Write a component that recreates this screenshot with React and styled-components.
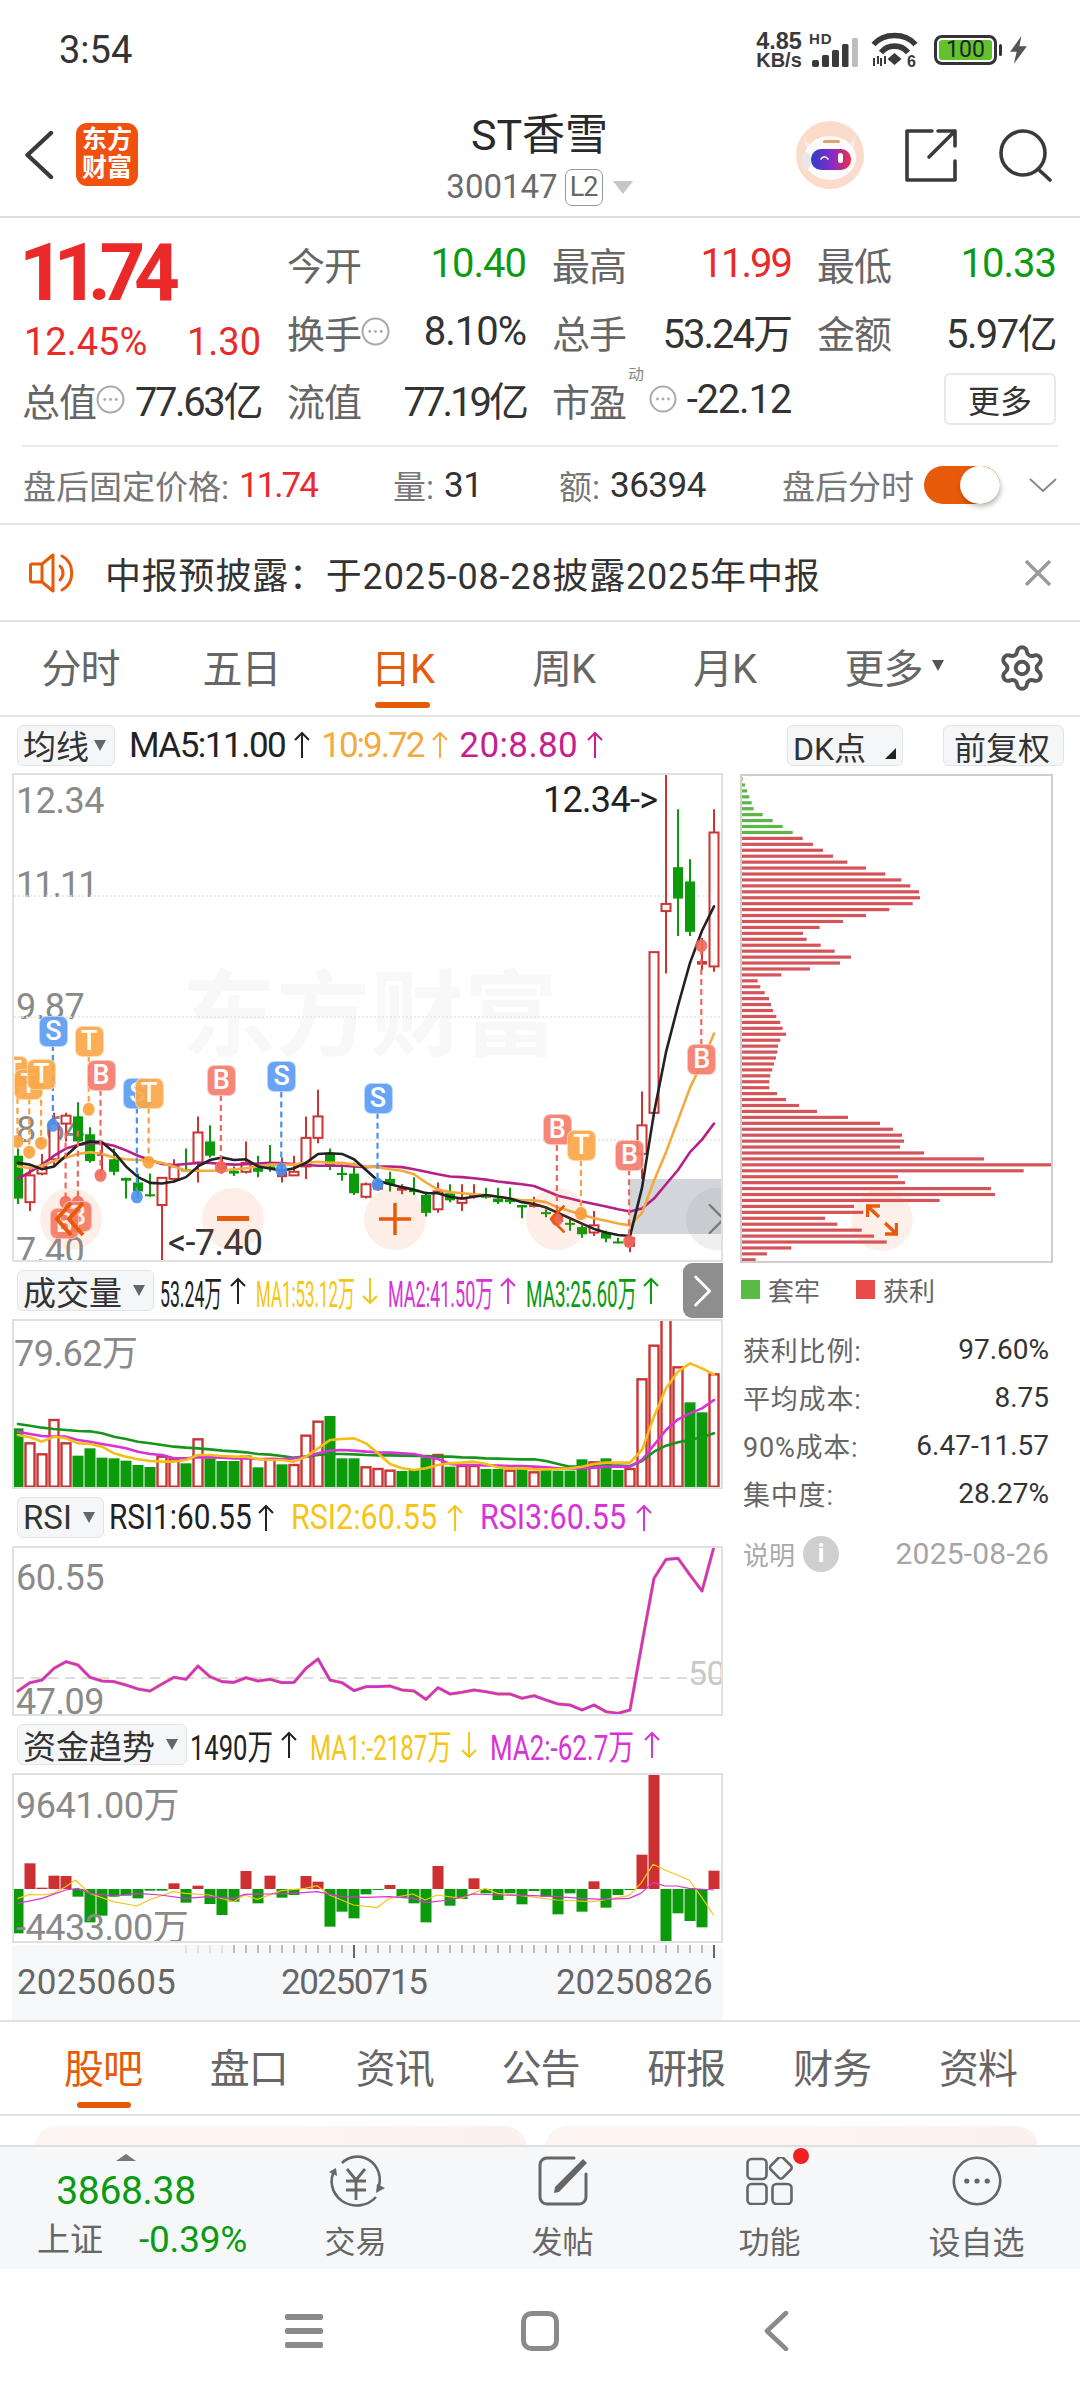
import React from 'react';
import styled, { createGlobalStyle } from 'styled-components';
import { Settings } from 'lucide-react';

const GlobalStyle = createGlobalStyle`
  html, body { margin: 0; padding: 0; background: #fff; }
  * { box-sizing: border-box; }
`;

const RED = '#ea2a2a';
const GREEN = '#0a9b12';
const ORANGE = '#e65a0a';
const YELLOW = '#f5c518';
const MAGENTA = '#d733d7';

/* ---------- data, read from the picture ---------- */
const px = (z) => z / 2.119;
const py = (z) => 720 + z / 2.8;
const vy = (z) => 1260 + z / 3;
const fy = (z) => 1720 + z / 3;
const cx = (i) => 18 + 12 * i;

const CANDLES = [
  ['g',1200,1220,1340,1355],['r',1250,1275,1350,1375],['r',1215,1250,1270,1275],['r',1100,1130,1230,1250],
  ['r',1100,1108,1130,1180],['g',1070,1110,1180,1185],['g',1140,1160,1235,1240],['R',1180,1215,1219,1265],
  ['g',1200,1230,1265,1275],['g',1282,1282,1290,1340],['g',1270,1295,1320,1340],['g',1270,1328,1333,1335],
  ['r',1282,1282,1358,1518],['r',1230,1250,1285,1295],['g',1200,1258,1264,1265],['r',1110,1155,1240,1295],
  ['g',1135,1180,1220,1225],['R',1225,1240,1265,1270],['g',1250,1262,1270,1277],['r',1180,1240,1265,1270],
  ['g',1220,1250,1265,1280],['g',1190,1250,1256,1265],['R',1225,1265,1280,1295],['r',1220,1265,1275,1277],
  ['r',1110,1170,1250,1285],['r',1035,1110,1170,1185],['g',1200,1215,1250,1260],['g',1245,1268,1274,1290],
  ['g',1240,1270,1325,1330],['r',1295,1300,1335,1340],['R',1290,1295,1315,1318],['g',1265,1285,1300,1320],
  ['R',1300,1310,1318,1328],['g',1280,1315,1322,1330],['g',1320,1330,1380,1390],['r',1295,1320,1370,1380],
  ['g',1300,1325,1345,1350],['r',1300,1340,1352,1375],['R',1300,1328,1333,1340],['g',1310,1332,1337,1340],
  ['g',1310,1340,1350,1355],['g',1310,1342,1350,1355],['g',1358,1358,1365,1395],['R',1335,1358,1363,1365],
  ['g',1370,1378,1383,1392],['R',1375,1385,1405,1410],['g',1395,1408,1413,1430],['g',1415,1420,1440,1450],
  ['r',1375,1415,1435,1445],['g',1430,1435,1452,1462],['g',1450,1460,1465,1466],['R',1440,1448,1475,1490],
  ['r',1040,1135,1215,1285],['r',650,650,1100,1110],['r',150,515,535,710],['g',250,412,500,605],
  ['g',390,452,593,605],['R',610,675,685,700],['r',250,315,690,705],
];
const MA5 = [1240,1245,1258,1250,1220,1190,1180,1182,1210,1250,1280,1296,1298,1292,1280,1250,1232,1225,1232,1230,1250,1256,1262,1255,1240,1215,1213,1215,1230,1260,1290,1300,1308,1315,1325,1325,1335,1340,1335,1330,1335,1340,1350,1355,1365,1380,1395,1410,1425,1435,1442,1445,1310,1100,930,800,680,590,522];
const MA10 = [1250,1255,1248,1235,1225,1215,1210,1215,1225,1230,1232,1235,1240,1250,1262,1262,1262,1262,1258,1255,1250,1245,1245,1245,1240,1237,1240,1240,1245,1250,1252,1258,1262,1272,1295,1315,1322,1325,1328,1330,1335,1340,1345,1345,1350,1365,1375,1385,1395,1402,1410,1415,1380,1290,1210,1120,1030,960,878];
const MA20 = [1285,1265,1245,1220,1200,1190,1185,1185,1192,1205,1220,1232,1243,1246,1243,1240,1240,1243,1245,1244,1242,1240,1241,1243,1246,1248,1248,1248,1250,1252,1250,1250,1252,1258,1265,1272,1278,1280,1283,1287,1292,1296,1300,1305,1318,1332,1340,1348,1355,1362,1370,1376,1368,1340,1300,1260,1210,1175,1130];

const BADGES = [
  { l: 'T', x: 28, y: 985 }, { l: 'T', x: 60, y: 1020 }, { l: 'T', x: 87, y: 993 },
  { l: 'S', x: 112, y: 872 }, { l: 'T', x: 188, y: 900 }, { l: 'B', x: 213, y: 995 },
  { l: 'S', x: 290, y: 1045 }, { l: 'T', x: 315, y: 1045 }, { l: 'B', x: 468, y: 1008 },
  { l: 'S', x: 596, y: 998 }, { l: 'S', x: 800, y: 1060 }, { l: 'B', x: 1180, y: 1147 },
  { l: 'T', x: 1231, y: 1190 }, { l: 'B', x: 1333, y: 1218 }, { l: 'B', x: 1486, y: 950 },
  { l: 'B', x: 163, y: 1390 }, { l: 'B', x: 135, y: 1410 },
];
const BADGE_COLOR = { B: '#f67c6c', T: '#fba848', S: '#5c9df2' };
const DRAW_COLOR = { B: '#f2695c', T: '#f9a23a', S: '#4a90ee' };
const DROPS = [
  ['T',37,1030,1180],['T',62,1060,1210],['T',87,1035,1185],['S',112,910,1135],['T',188,940,1090],['B',213,1035,1275],
  ['S',290,1085,1335],['T',315,1085,1238],['B',468,1050,1252],['S',596,1040,1260],['S',800,1100,1300],
  ['B',1180,1190,1398],['T',1231,1232,1382],['B',1333,1258,1460],['B',1486,910,632],['B',139,1155,1350],['B',165,1150,1350],
];

const VOL = [['g',505],['r',550],['r',583],['r',480],['r',550],['g',587],['g',565],['g',593],['g',595],['g',602],['g',615],['g',621],['r',590],['r',598],['g',610],['r',538],['g',595],['g',603],['g',603],['r',590],['g',622],['r',597],['g',613],['r',615],['r',527],['r',485],['g',468],['g',595],['g',595],['r',622],['r',627],['r',632],['g',633],['g',630],['g',592],['r',585],['g',620],['r',618],['r',618],['g',627],['g',627],['r',632],['g',627],['r',637],['g',630],['g',632],['g',632],['g',598],['r',607],['g',595],['g',630],['r',627],['r',358],['r',257],['r',178],['r',322],['g',427],['g',457],['r',343]];
const VOL1 = [525,532,545,530,535,550,552,560,580,590,598,603,605,605,600,585,585,588,590,590,597,600,600,605,590,565,540,537,535,550,580,612,625,630,625,615,610,608,605,612,622,625,625,628,628,627,625,620,612,608,608,608,570,470,385,335,310,325,343];
const VOL2 = [515,522,528,530,530,540,545,552,558,565,575,582,585,595,595,592,592,593,595,595,597,597,597,595,590,580,572,570,572,575,577,578,580,582,590,597,612,615,615,616,617,618,618,620,622,625,625,625,623,620,620,620,600,555,510,478,460,445,420];
const VOL3 = [492,497,503,507,510,513,514,520,530,537,545,550,555,560,563,565,568,572,574,577,582,584,588,593,590,585,582,582,583,585,586,586,587,588,588,590,590,592,593,595,596,597,598,598,603,612,620,620,618,617,617,618,603,575,557,547,540,532,520];
const RSI = [1293,1268,1260,1225,1205,1215,1252,1263,1265,1275,1287,1293,1272,1252,1258,1218,1250,1265,1267,1253,1263,1258,1268,1267,1225,1197,1260,1268,1292,1280,1280,1278,1290,1293,1318,1283,1302,1297,1290,1295,1302,1302,1315,1307,1320,1332,1335,1350,1335,1355,1360,1350,1150,955,898,895,945,993,860];
const FUND = [640,430,503,467,468,530,607,587,530,527,535,512,512,490,548,497,552,585,545,453,550,467,533,525,468,485,620,575,595,523,510,495,533,550,607,438,557,537,475,520,540,520,553,513,530,583,520,575,484,563,525,510,404,158,665,580,603,622,452];
const FUND1 = [[38,535],[63,523],[89,525],[114,520],[139,500],[160,480],[190,520],[240,545],[290,558],[316,540],[367,515],[392,520],[443,525],[494,545],[519,525],[545,538],[596,512],[647,505],[672,497],[698,525],[749,555],[799,563],[825,535],[875,522],[901,540],[926,525],[977,535],[1028,505],[1054,520],[1104,527],[1180,540],[1257,545],[1333,527],[1358,490],[1384,433],[1409,450],[1460,480],[1486,530],[1512,585]];
const FUND2 = [[38,550],[89,535],[139,510],[165,505],[190,520],[240,528],[290,520],[340,525],[392,535],[443,530],[494,535],[519,523],[570,522],[621,520],[672,515],[723,530],[774,532],[825,530],[875,535],[901,548],[952,540],[1003,522],[1054,525],[1130,527],[1180,530],[1231,535],[1282,538],[1333,535],[1358,520],[1384,487],[1409,498],[1435,498],[1460,505],[1512,510]];
const CHIPS = [68,75,81,88,95,101,128,158,188,218,248,279,309,339,382,438,496,544,571,597,600,578,508,438,369,299,249,260,302,344,393,360,270,184,113,121,134,147,153,159,169,181,188,198,181,174,172,168,162,157,151,148,148,171,198,237,291,384,480,519,546,552,540,612,792,993,911,534,555,813,825,659,402,430,315,352,425,462,500,214,141,107];

const series = (list, toY) => list.map((v, i) => `${cx(i)},${toY(v)}`).join(' ');

/* ---------- page frame ---------- */
const Page = styled.div`
  width: 1080px;
  height: 2400px;
  background: #fff;
  display: flex;
  flex-direction: column;
  overflow: hidden;
  color: #333;
  font-family: Roboto, "Noto Sans CJK SC", sans-serif;
  font-weight: 400;
`;

const StatusBar = styled.div`
  height: 85px;
  display: flex;
  align-items: center;
  padding: 15px 52px 0 59px;
  justify-content: space-between;
`;
const Clock = styled.span`
  font-size: 38px;
  color: #333;
`;
const StatusIcons = styled.div`
  display: flex;
  align-items: center;
`;
const NetSpeed = styled.div`
  font-size: 20px;
  line-height: 18px;
  font-weight: 700;
  color: #3a3a3a;
  text-align: center;
  width: 48px;
  font-family: "Liberation Sans", sans-serif;
`;
const NetValue = styled.div`
  font-size: 23.5px;
  line-height: 20px;
`;
const SignalWrap = styled.div`
  position: relative;
  margin-left: 9px;
  width: 46px;
  height: 34px;
`;
const HdMark = styled.span`
  position: absolute;
  left: -3px;
  top: -2px;
  font-size: 15px;
  line-height: 15px;
  font-weight: 700;
  letter-spacing: 1px;
  color: #3a3a3a;
  font-family: "Liberation Sans", sans-serif;
`;
const Battery = styled.div`
  width: 63px;
  height: 30px;
  margin-left: 16px;
  border: 3px solid #333;
  border-radius: 8px;
  padding: 2px;
  display: flex;
`;
const BatteryFill = styled.div`
  flex: 1;
  background: #63c22c;
  border-radius: 3px;
  font-size: 23px;
  line-height: 20px;
  text-align: center;
  color: #223;
`;
const BatteryCap = styled.div`
  width: 3px;
  height: 12px;
  margin-left: 2px;
  border-radius: 2px;
  background: #333;
`;

const Header = styled.div`
  height: 133px;
  display: grid;
  grid-template-columns: 1fr auto 1fr;
  align-items: center;
  padding: 8px 28px 0 24px;
  border-bottom: 2px solid #ddd;
`;
const HeaderLeft = styled.div`
  display: flex;
  align-items: center;
  gap: 22px;
`;
const Logo = styled.div`
  width: 62px;
  height: 63px;
  border-radius: 11px;
  background: #f0510f;
  color: #fff;
  font-size: 25px;
  line-height: 28px;
  font-weight: 700;
  text-align: center;
  padding-top: 3px;
`;
const TitleBlock = styled.div`
  align-self: start;
  margin: 19px 0 0 3px;
  display: flex;
  flex-direction: column;
  align-items: center;
`;
const Title = styled.div`
  font-size: 43px;
  line-height: 46px;
  color: #2a2a2a;
`;
const CodeRow = styled.div`
  display: flex;
  align-items: center;
  margin-top: 10px;
  font-size: 33px;
  color: #6b6b6b;
  line-height: 38px;
`;
const LevelTag = styled.span`
  margin-left: 7px;
  width: 38px;
  height: 37px;
  border: 1.5px solid #999;
  border-radius: 7px;
  font-size: 27px;
  line-height: 34px;
  text-align: center;
  color: #666;
  letter-spacing: -1px;
`;
const CaretDown = styled.span`
  margin-left: 10px;
  border-left: 10px solid transparent;
  border-right: 10px solid transparent;
  border-top: 13px solid #c6c6c6;
`;
const HeaderRight = styled.div`
  display: flex;
  align-items: center;
  justify-content: flex-end;
  gap: 40px;
`;

/* ---------- quote ---------- */
const Quote = styled.div`
  margin: 0 22px;
  height: 229px;
  padding: 11px 2px 0 0;
  display: grid;
  grid-template-columns: repeat(4, 1fr);
  grid-auto-rows: 68px;
  column-gap: 26px;
  border-bottom: 2px solid #eaeaea;
`;
const PriceCell = styled.div`
  grid-row: 1 / 3;
  display: flex;
  flex-direction: column;
`;
const Price = styled.div`
  font-size: 80px;
  line-height: 70px;
  margin: 9px 0 0 -3px;
  font-weight: 700;
  letter-spacing: -11.5px;
  color: ${RED};
`;
const ChangeRow = styled.div`
  display: flex;
  justify-content: space-between;
  font-size: 38px;
  line-height: 44px;
  margin: 12px 0 0 2px;
  color: ${RED};
`;
const Cell = styled.div`
  display: flex;
  align-items: center;
  justify-content: ${(p) => p.$justify || 'space-between'};
`;
const Label = styled.span`
  display: inline-flex;
  align-items: center;
  font-size: 38px;
  letter-spacing: -1px;
  color: #666;
  position: relative;
`;
const Value = styled.span`
  font-size: 40px;
  letter-spacing: ${(p) => p.$ls ?? -1}px;
  color: ${(p) => p.$color || '#333'};
`;
const Super = styled.sup`
  position: absolute;
  left: 76px;
  top: -6px;
  font-size: 16px;
  line-height: 18px;
  color: #888;
`;
const SuperGap = styled.span`
  width: 23px;
`;
const MoreButton = styled.button`
  width: 112px;
  height: 52px;
  padding: 0;
  border: 2px solid #e8e8e8;
  border-radius: 6px;
  background: #fff;
  font: inherit;
  font-size: 32px;
  color: #333;
`;

const AfterHours = styled.div`
  height: 78px;
  padding-left: 23px;
  display: grid;
  grid-template-columns: 370px 166px 223px 1fr;
  align-items: center;
  font-size: 33px;
  border-bottom: 2px solid #e6e6e6;
`;
const HoursItem = styled.div`
  display: flex;
  align-items: center;
  color: #777;
  gap: ${(p) => p.$gap ?? 10}px;
`;
const HoursValue = styled.span`
  font-size: 35px;
  letter-spacing: ${(p) => p.$ls ?? -0.5}px;
  color: ${(p) => p.$color || '#333'};
`;
const Toggle = styled.div`
  width: 76px;
  height: 38px;
  border-radius: 19px;
  background: ${ORANGE};
  display: flex;
  justify-content: flex-end;
`;
const ToggleKnob = styled.div`
  width: 40px;
  height: 38px;
  border-radius: 50%;
  background: #fff;
  box-shadow: 1px 3px 5px rgba(0, 0, 0, 0.25);
`;

const Notice = styled.div`
  height: 97px;
  display: flex;
  align-items: center;
  padding: 0 28px 0 29px;
  border-bottom: 2px solid #e3e3e3;
`;
const NoticeText = styled.div`
  flex: 1;
  margin-left: 30px;
  font-size: 36px;
  letter-spacing: 0.8px;
  color: #333;
`;

const PeriodTabs = styled.div`
  height: 95px;
  display: grid;
  grid-template-columns: repeat(5, 161px) 178px 1fr;
  align-items: stretch;
  border-bottom: 2px solid #e3e3e3;
`;
const Period = styled.div`
  position: relative;
  display: flex;
  align-items: center;
  justify-content: center;
  padding-bottom: 6px;
  font-size: 40px;
  letter-spacing: -1px;
  color: ${(p) => (p.$active ? ORANGE : '#666')};
  &::after {
    content: '';
    display: ${(p) => (p.$active ? 'block' : 'none')};
    position: absolute;
    left: 50%;
    bottom: 7px;
    width: 55px;
    height: 6px;
    margin-left: -28px;
    border-radius: 3px;
    background: ${ORANGE};
  }
`;
const SmallCaret = styled.span`
  margin-left: 9px;
  border-left: 6px solid transparent;
  border-right: 6px solid transparent;
  border-top: 11px solid #555;
`;
const GearSlot = styled.div`
  display: flex;
  align-items: center;
  padding: 0 0 2px 14px;
  color: #555;
`;

/* ---------- charts ---------- */
const ChartArea = styled.div`
  display: flex;
  height: 1305px;
  border-bottom: 2px solid #e2e2e2;
`;
const LeftColumn = styled.div`
  width: 711px;
  margin-left: 12px;
  display: flex;
  flex-direction: column;
`;
const Toolbar = styled.div`
  flex: none;
  height: ${(p) => p.$h}px;
  display: flex;
  align-items: center;
  position: relative;
`;
const Select = styled.div`
  position: relative;
  height: 41px;
  width: ${(p) => p.$w}px;
  margin-left: ${(p) => p.$ml ?? 5}px;
  flex: none;
  display: flex;
  align-items: center;
  justify-content: ${(p) => p.$justify || 'space-between'};
  padding: 0 8px 0 5px;
  background: #f5f6f8;
  border: 1.5px solid #e2e3e6;
  border-radius: 6px;
  font-size: ${(p) => p.$fs || 33}px;
  color: #333;
`;
const SelectCaret = styled.span`
  border-left: 6px solid transparent;
  border-right: 6px solid transparent;
  border-top: 11px solid #666;
`;
const CornerCaret = styled.span`
  position: absolute;
  right: 6px;
  bottom: 6px;
  border-left: 11px solid transparent;
  border-bottom: 11px solid #222;
`;
const Legend = styled.div`
  display: flex;
  align-items: center;
  margin-left: ${(p) => p.$ml}px;
  gap: ${(p) => p.$gap}px;
  font-size: ${(p) => p.$fs}px;
`;
const LegendItem = styled.span`
  display: inline-flex;
  align-items: center;
  color: ${(p) => p.$color};
  letter-spacing: ${(p) => p.$ls ?? 0}px;
  white-space: nowrap;
`;
/* the app draws these read-outs in a condensed face: same glyphs, narrowed */
const Condensed = styled.span`
  display: inline-block;
  width: ${(p) => p.$w}px;
  white-space: nowrap;
  transform-origin: left center;
  transform: scaleX(${(p) => p.$sx});
`;
const LegendArrow = styled.svg`
  width: 18px;
  height: 28px;
  margin-left: ${(p) => p.$ml ?? 8}px;
  flex: none;
`;
const PanelToggle = styled.div`
  position: absolute;
  right: 0;
  top: 1px;
  width: 40px;
  height: 55px;
  background: #8e8e8e;
  border-radius: 9px 0 0 9px;
  display: flex;
  align-items: center;
  justify-content: center;
`;
const ChartBox = styled.div`
  flex: none;
  position: relative;
  height: ${(p) => p.$h}px;
  border: 2px solid #e0e0e0;
  overflow: hidden;
`;
const Plot = styled.svg`
  display: block;
  position: relative;
`;
const AxisLabel = styled.span`
  position: absolute;
  left: ${(p) => p.$x}px;
  top: ${(p) => p.$y}px;
  font-size: ${(p) => p.$fs || 36}px;
  line-height: 36px;
  color: ${(p) => p.$color || '#8a8a8a'};
  letter-spacing: ${(p) => p.$ls ?? -0.5}px;
  white-space: nowrap;
`;
const Watermark = styled.span`
  position: absolute;
  left: 168px;
  top: 192px;
  font-size: 94px;
  line-height: 100px;
  font-weight: 700;
  color: #f8f8f8;
  white-space: nowrap;
`;
const Badge = styled.span`
  position: absolute;
  width: 29px;
  height: 31px;
  border-radius: 7px;
  border: 1px solid rgba(255, 255, 255, 0.55);
  background: ${(p) => p.$color};
  opacity: 0.92;
  color: #fff;
  font-size: 27px;
  line-height: 29px;
  font-weight: 500;
  text-align: center;
`;
const RoundControl = styled.div`
  position: absolute;
  left: ${(p) => p.$x - 31}px;
  top: ${(p) => p.$y - 31}px;
  width: 62px;
  height: 62px;
  border-radius: 50%;
  background: ${(p) => p.$tint};
  display: flex;
  align-items: center;
  justify-content: center;
`;

const DateAxis = styled.div`
  margin-top: 2px;
  height: 77px;
  background: #f7f8fa;
  display: flex;
  flex-direction: column;
`;
const DateRow = styled.div`
  display: grid;
  grid-template-columns: 264px 275px 1fr;
  padding: 3px 0 0 5px;
  font-size: 35px;
  color: #666;
`;
const DateText = styled.span`
  letter-spacing: ${(p) => p.$ls}px;
`;

/* ---------- chip column ---------- */
const RightColumn = styled.div`
  width: 324px;
  margin-left: 17px;
  display: flex;
  flex-direction: column;
`;
const ChipBox = styled.div`
  position: relative;
  width: 313px;
  height: 489px;
  border: 2px solid #cfcfcf;
`;
const ChipLegend = styled.div`
  display: flex;
  align-items: center;
  height: 52px;
  font-size: 26px;
  color: #666;
  padding-left: 1px;
`;
const Swatch = styled.span`
  width: 19px;
  height: 19px;
  background: ${(p) => p.$color};
  margin-right: 8px;
  margin-left: ${(p) => p.$ml || 0}px;
`;
const Stats = styled.div`
  width: 309px;
  margin-top: 10px;
  padding-left: 3px;
  display: flex;
  flex-direction: column;
`;
const StatRow = styled.div`
  height: 48px;
  display: flex;
  align-items: center;
  justify-content: space-between;
  font-size: 27px;
  letter-spacing: 0.8px;
  color: #666;
`;
const StatValue = styled.span`
  font-size: 28px;
  color: #333;
  letter-spacing: 0;
`;
const NoteRow = styled.div`
  margin-top: 18px;
  display: flex;
  align-items: center;
  font-size: 26px;
  color: #aaa;
`;
const InfoDot = styled.span`
  width: 36px;
  height: 36px;
  margin-left: 8px;
  border-radius: 50%;
  background: #cfcfcf;
  color: #fff;
  font-size: 25px;
  line-height: 36px;
  font-weight: 700;
  text-align: center;
`;
const NoteDate = styled.span`
  margin-left: auto;
  font-size: 30px;
  letter-spacing: 0.2px;
  color: #a5a5a5;
`;

/* ---------- bottom ---------- */
const InfoTabs = styled.div`
  height: 94px;
  display: flex;
  justify-content: space-between;
  padding: 27px 63px 0 64px;
  border-bottom: 2px solid #e2e2e2;
`;
const InfoTab = styled.div`
  position: relative;
  font-size: 40px;
  line-height: 42px;
  letter-spacing: -1px;
  color: ${(p) => (p.$active ? ORANGE : '#666')};
  &::after {
    content: '';
    display: ${(p) => (p.$active ? 'block' : 'none')};
    position: absolute;
    left: 13px;
    top: 53px;
    width: 54px;
    height: 6px;
    border-radius: 3px;
    background: ${ORANGE};
  }
`;
const Peek = styled.div`
  height: 29px;
  padding: 10px 42px 0 34px;
  display: grid;
  grid-template-columns: 1fr 1fr;
  gap: 18px;
  overflow: hidden;
`;
const PeekCard = styled.div`
  height: 40px;
  border-radius: 22px 22px 0 0;
  background: linear-gradient(90deg, #fdf5f3, #fdf1ee);
`;
const BottomBar = styled.div`
  height: 124px;
  background: #f6f7f9;
  border-top: 2px solid #dedede;
  display: grid;
  grid-template-columns: 252px repeat(4, 207px);
`;
const IndexBlock = styled.div`
  display: flex;
  flex-direction: column;
  align-items: center;
  padding-top: 7px;
`;
const IndexCaret = styled.span`
  border-left: 10px solid transparent;
  border-right: 10px solid transparent;
  border-bottom: 7px solid #777;
`;
const IndexValue = styled.div`
  margin-top: 10px;
  font-size: 39px;
  line-height: 40px;
  letter-spacing: -0.3px;
  color: ${GREEN};
`;
const IndexRow = styled.div`
  align-self: flex-start;
  margin: 9px 0 0 37px;
  display: flex;
  align-items: center;
  gap: 36px;
  line-height: 40px;
  font-size: 33px;
  color: #666;
`;
const IndexChange = styled.span`
  font-size: 37px;
  color: ${GREEN};
  letter-spacing: -0.2px;
`;
const NavAction = styled.div`
  position: relative;
  display: flex;
  flex-direction: column;
  align-items: center;
  padding-top: 6px;
  font-size: ${(p) => p.$fs || 31}px;
  line-height: 38px;
  color: #666;
`;
const IconSlot = styled.div`
  height: 56px;
  margin-bottom: 15px;
  display: flex;
  align-items: center;
  justify-content: center;
`;
const RedDot = styled.span`
  position: absolute;
  left: 127px;
  top: 1px;
  width: 16px;
  height: 16px;
  border-radius: 50%;
  background: #ee2020;
`;
const SystemNav = styled.div`
  flex: 1;
  display: grid;
  grid-template-columns: repeat(3, 236px);
  justify-content: center;
  justify-items: center;
  align-items: center;
  padding-bottom: 8px;
`;

/* ---------- drawings ---------- */
const UpArrow = ({ color, ml, down }) => (
  <LegendArrow viewBox="0 0 18 28" $ml={ml}>
    <path d={down ? 'M9 1V26M2 19L9 26L16 19' : 'M9 27V2M2 9L9 2L16 9'} stroke={color} strokeWidth="2" fill="none" />
  </LegendArrow>
);
const DotsCircle = ({ size, stroke = '#aaa', sw = 2 }) => (
  <svg width={size} height={size} viewBox="0 0 28 28" style={{ flex: 'none' }}>
    <circle cx="14" cy="14" r="12.5" fill="none" stroke={stroke} strokeWidth={sw} />
    <circle cx="8.5" cy="14" r="1.4" fill={stroke} />
    <circle cx="14" cy="14" r="1.4" fill={stroke} />
    <circle cx="19.5" cy="14" r="1.4" fill={stroke} />
  </svg>
);
const Chev = ({ dir, color = ORANGE, w = 30, h = 46, sw = 4 }) => (
  <svg width={w} height={h} viewBox="0 0 30 46">
    <path d={dir === 'left' ? 'M25 4L6 23L25 42' : 'M5 4L24 23L5 42'} fill="none" stroke={color} strokeWidth={sw} strokeLinecap="round" strokeLinejoin="round" />
  </svg>
);
const BackIcon = () => (
  <svg width="30" height="50" viewBox="0 0 30 50">
    <path d="M27 3L3.5 25L27 47" fill="none" stroke="#3a3a3a" strokeWidth="4.4" strokeLinecap="round" strokeLinejoin="round" />
  </svg>
);
const SignalIcon = () => (
  <svg width="46" height="30" viewBox="0 0 46 30" style={{ position: 'absolute', left: 0, bottom: 0 }}>
    <rect x="0" y="23" width="7" height="7" rx="2" fill="#3a3a3a" />
    <rect x="10" y="18" width="7" height="12" rx="1.5" fill="#3a3a3a" />
    <rect x="20" y="13" width="7" height="17" rx="1.5" fill="#3a3a3a" />
    <rect x="30" y="7" width="6.5" height="23" rx="1.5" fill="#3a3a3a" />
    <rect x="40" y="1" width="6" height="29" rx="1.5" fill="#bdbdbd" />
  </svg>
);
const WifiIcon = () => (
  <svg width="47" height="36" viewBox="0 0 47 36" style={{ marginLeft: 13 }}>
    <path d="M2.5 12.5C13 0.5 34 0.5 44.5 12.5" fill="none" stroke="#3a3a3a" strokeWidth="5.6" />
    <path d="M10 20.5C17 12 30 12 37 20.5" fill="none" stroke="#3a3a3a" strokeWidth="5.6" />
    <path d="M16.5 27L23.5 21L30.5 27L23.5 33Z" fill="#3a3a3a" />
    <path d="M3 26V34M7 32V24M10 26V34M14 24V32" stroke="#3a3a3a" strokeWidth="2" fill="none" />
    <text x="36" y="35" fontSize="16" fontWeight="700" fill="#3a3a3a" fontFamily="Liberation Sans">6</text>
  </svg>
);
const BoltIcon = () => (
  <svg width="19" height="28" viewBox="0 0 20 30" style={{ marginLeft: 7 }}>
    <path d="M13 0L1 17H8L5 30L19 11H11Z" fill="#555" />
  </svg>
);
const Avatar = () => (
  <svg width="68" height="68" viewBox="0 0 68 68">
    <defs>
      <linearGradient id="visor" x1="0" x2="1" y1="0" y2="0">
        <stop offset="0" stopColor="#2f3fc8" />
        <stop offset="0.55" stopColor="#8a2bc6" />
        <stop offset="1" stopColor="#ee2f45" />
      </linearGradient>
    </defs>
    <circle cx="34" cy="34" r="34" fill="#fbdccb" />
    <path d="M8 16C10 22 14 24 18 24L14 30C10 26 8 22 8 16Z" fill="#f2efee" />
    <path d="M58 16C57 22 53 24 49 24L54 30C58 26 59 22 58 16Z" fill="#f2efee" />
    <ellipse cx="34" cy="37" rx="26" ry="22" fill="#fbfbfb" />
    <ellipse cx="10" cy="40" rx="5" ry="9" fill="#e9e6e4" />
    <rect x="27" y="19" width="17" height="3" rx="1.5" fill="#e99d68" />
    <rect x="15" y="28" width="40" height="21" rx="10" fill="url(#visor)" />
    <path d="M25 38C27 35 30 35 32 38" stroke="#fff" strokeWidth="1.6" fill="none" strokeLinecap="round" />
    <rect x="42" y="32" width="5" height="10" rx="2.5" fill="#fff" />
  </svg>
);
const ShareIcon = () => (
  <svg width="54" height="54" viewBox="0 0 54 54">
    <path d="M28 3H3V52H51V33" fill="none" stroke="#3a3a3a" strokeWidth="3.6" strokeLinejoin="round" strokeLinecap="round" />
    <path d="M51 18V3H34M51 3L25 29" fill="none" stroke="#3a3a3a" strokeWidth="3.6" strokeLinejoin="round" strokeLinecap="round" />
  </svg>
);
const SearchIcon = () => (
  <svg width="54" height="54" viewBox="0 0 54 54">
    <circle cx="25" cy="25" r="22" fill="none" stroke="#3a3a3a" strokeWidth="3.6" />
    <path d="M40 41L52 52" fill="none" stroke="#3a3a3a" strokeWidth="3.6" strokeLinecap="round" />
  </svg>
);
const SpeakerIcon = () => (
  <svg width="46" height="40" viewBox="0 0 46 40" style={{ flex: 'none' }}>
    <path d="M13 11H3C2 11 1.5 12 1.5 13V27C1.5 28 2 29 3 29H13L24 38V2Z" fill="none" stroke={ORANGE} strokeWidth="3" strokeLinejoin="round" />
    <path d="M13 11V29" stroke={ORANGE} strokeWidth="3" />
    <path d="M31 13C35 17 35 23 31 27" fill="none" stroke={ORANGE} strokeWidth="3" strokeLinecap="round" />
    <path d="M33 37C46 30 46 10 33 3" fill="none" stroke={ORANGE} strokeWidth="3" strokeLinecap="round" />
  </svg>
);
const CloseIcon = () => (
  <svg width="28" height="26" viewBox="0 0 28 26">
    <path d="M2 1L26 25M26 1L2 25" stroke="#9a9a9a" strokeWidth="3.4" />
  </svg>
);
const ChevronDownThin = () => (
  <svg width="28" height="14" viewBox="0 0 28 14" style={{ marginLeft: 19 }}>
    <path d="M1 1L14 13L27 1" fill="none" stroke="#8a8a8a" strokeWidth="2" />
  </svg>
);
const TradeIcon = () => (
  <svg width="58" height="54" viewBox="0 0 58 54">
    <path d="M15 9C21 3 30 1 38 4C49 8 55 20 52 32" fill="none" stroke="#666" strokeWidth="2.6" />
    <path d="M49 43C40 53 26 54 15 47C4 39 2 25 8 16" fill="none" stroke="#666" strokeWidth="2.6" />
    <path d="M2 18L9 14L10 22Z" fill="#666" />
    <path d="M58 34L49 39L50 30Z" fill="#666" />
    <path d="M20 15L29 26L38 15M19 27H39M19 36H39M29 26V46" fill="none" stroke="#666" strokeWidth="2.8" />
  </svg>
);
const PostIcon = () => (
  <svg width="50" height="50" viewBox="0 0 50 50">
    <path d="M36 2H9C5 2 2 5 2 9V41C2 45 5 48 9 48H41C45 48 48 45 48 41V18" fill="none" stroke="#666" strokeWidth="3" strokeLinecap="round" />
    <path d="M17 31L45 3L49 7L21 36L16 37Z" fill="#666" />
  </svg>
);
const AppsIcon = () => (
  <svg width="48" height="48" viewBox="0 0 48 48">
    <rect x="1.5" y="2" width="19" height="20" rx="4" fill="none" stroke="#666" strokeWidth="2.6" />
    <rect x="26" y="2" width="17" height="17" rx="3" fill="none" stroke="#666" strokeWidth="2.6" transform="rotate(45 34.5 11)" />
    <rect x="1.5" y="27" width="19" height="20" rx="4" fill="none" stroke="#666" strokeWidth="2.6" />
    <rect x="26.5" y="27" width="19" height="20" rx="4" fill="none" stroke="#666" strokeWidth="2.6" />
  </svg>
);
const ResizeIcon = () => (
  <svg width="32" height="32" viewBox="0 0 32 32">
    <path d="M1.5 13V2H14M2.5 3L13 13M19 30H30.5V19M30 29.5L19 19" fill="none" stroke={ORANGE} strokeWidth="3.4" />
  </svg>
);

const Line = ({ points, color, width = 2.2 }) => (
  <polyline points={points} fill="none" stroke={color} strokeWidth={width} strokeLinejoin="round" strokeLinecap="round" />
);

const CandleShape = ({ d, i }) => {
  const [k, hi, top, bot, lo] = d;
  const x = cx(i);
  const color = k === 'g' ? '#0a9a0a' : '#cc3333';
  const hollow = k === 'r';
  return (
    <g>
      <line x1={x} x2={x} y1={py(hi)} y2={py(lo)} stroke={color} strokeWidth="2" />
      <rect
        x={x - (hollow ? 4.5 : 5)}
        y={py(top)}
        width={hollow ? 9 : 10}
        height={Math.max(py(bot) - py(top), 2)}
        fill={hollow ? '#fff' : color}
        stroke={hollow ? color : 'none'}
        strokeWidth="2"
      />
    </g>
  );
};

const PriceBox = () => (
  <ChartBox $h={489}>
    <Watermark>东方财富</Watermark>
    <AxisLabel $x={2} $y={8}>12.34</AxisLabel>
    <AxisLabel $x={2} $y={92} $ls={-2}>11.11</AxisLabel>
    <AxisLabel $x={2} $y={214}>9.87</AxisLabel>
    <AxisLabel $x={2} $y={337}>8.64</AxisLabel>
    <AxisLabel $x={2} $y={458}>7.40</AxisLabel>
    <Plot width="707" height="485" viewBox="14 775 707 485">
      {[896, 1017, 1140].map((y) => (
        <line key={y} x1="14" x2="721" y1={y} y2={y} stroke="#e4e4e4" strokeWidth="1.5" strokeDasharray="2 2" />
      ))}
      <rect x="629" y="1179" width="94" height="55" fill="#d2d5da" />
      {CANDLES.map((d, i) => <CandleShape key={i} d={d} i={i} />)}
      <Line points={series(MA20, py)} color="#b81f86" width="2.6" />
      <Line points={series(MA10, py)} color="#f2ab3c" width="2.6" />
      <Line points={series(MA5, py)} color="#222" width="2.6" />
      {DROPS.map(([l, x, a, b], i) => (
        <g key={i}>
          <line x1={px(x)} x2={px(x)} y1={py(a)} y2={py(b)} stroke={DRAW_COLOR[l]} strokeWidth="2.2" strokeDasharray="6 4" />
          <ellipse cx={px(x)} cy={py(b)} rx="6" ry="6.5" fill={DRAW_COLOR[l]} opacity="0.9" />
        </g>
      ))}
    </Plot>
    <AxisLabel $x={529} $y={7} $color="#222" $ls={-0.7}>12.34-&gt;</AxisLabel>
    <AxisLabel $x={154} $y={450} $color="#333" $ls={-0.7}>&lt;-7.40</AxisLabel>
    {BADGES.map((b, i) => (
      <Badge
        key={i}
        $color={BADGE_COLOR[b.l]}
        style={{ left: px(b.x) - 14 - 14, top: py(b.y) - 15.5 - 775 }}
      >
        {b.l}
      </Badge>
    ))}
    <RoundControl $x={57} $y={444} $tint="rgba(240,110,50,0.11)">
      <svg width="40" height="40" viewBox="0 0 40 40">
        <path d="M20 4L6 20L20 36M32 4L18 20L32 36" fill="none" stroke={ORANGE} strokeWidth="4" />
      </svg>
    </RoundControl>
    <RoundControl $x={219} $y={444} $tint="rgba(240,110,50,0.11)">
      <svg width="32" height="6" viewBox="0 0 32 6"><rect width="32" height="5" fill={ORANGE} /></svg>
    </RoundControl>
    <RoundControl $x={381} $y={444} $tint="rgba(240,110,50,0.11)">
      <svg width="32" height="32" viewBox="0 0 32 32"><path d="M0 16H32M16 0V32" stroke={ORANGE} strokeWidth="3.5" /></svg>
    </RoundControl>
    <RoundControl $x={543} $y={444} $tint="rgba(240,110,50,0.11)">
      <Chev dir="left" w={20} h={32} />
    </RoundControl>
    <RoundControl $x={703} $y={444} $tint="rgba(140,140,140,0.14)">
      <Chev dir="right" color="#777" w={22} h={38} sw={3} />
    </RoundControl>
  </ChartBox>
);

const VolumeBox = () => (
  <ChartBox $h={170}>
    <Plot width="707" height="166" viewBox="14 1321 707 166">
      {VOL.map(([k, t], i) =>
        k === 'g'
          ? <rect key={i} x={cx(i) - 5.5} y={vy(t)} width="11" height={vy(681) - vy(t)} fill="#0a9a0a" />
          : <rect key={i} x={cx(i) - 4.5} y={vy(t)} width="9" height={vy(680) - vy(t)} fill="#fff" stroke="#c93434" strokeWidth="2.4" />
      )}
      <Line points={series(VOL3, vy)} color="#16951c" width="2.6" />
      <Line points={series(VOL2, vy)} color="#d733d7" width="2.6" />
      <Line points={series(VOL1, vy)} color="#f5be16" width="2.6" />
    </Plot>
    <AxisLabel $x={0} $y={15}>79.62万</AxisLabel>
  </ChartBox>
);

const RsiBox = () => (
  <ChartBox $h={170}>
    <AxisLabel $x={2} $y={12}>60.55</AxisLabel>
    <AxisLabel $x={2} $y={136}>47.09</AxisLabel>
    <AxisLabel $x={674} $y={107} $color="#c8c8c8" $fs={34}>50</AxisLabel>
    <Plot width="707" height="166" viewBox="14 1548 707 166">
      <line x1="14" x2="721" y1="1678" y2="1678" stroke="#cfcfcf" strokeWidth="1.5" strokeDasharray="10 7" />
      <Line points={series(RSI, vy)} color="#f0c050" width="3.4" />
      <Line points={series(RSI, vy)} color="#cf30cf" width="2.6" />
    </Plot>
  </ChartBox>
);

const FundBox = () => (
  <ChartBox $h={170}>
    <Plot width="707" height="166" viewBox="14 1775 707 166">
      {FUND.map((t, i) => {
        const up = t < 507;
        const a = fy(Math.min(t, 507));
        const b = fy(Math.max(t, 507));
        return <rect key={i} x={cx(i) - 5.5} y={a} width="11" height={b - a} fill={up ? '#cc3030' : '#0a9a0a'} />;
      })}
      <Line points={FUND1.map(([x, y]) => `${px(x)},${fy(y)}`).join(' ')} color="#f5c518" width="1.2" />
      <Line points={FUND2.map(([x, y]) => `${px(x)},${fy(y)}`).join(' ')} color="#d733d7" width="1.2" />
    </Plot>
    <AxisLabel $x={2} $y={13}>9641.00万</AxisLabel>
    <AxisLabel $x={2} $y={135}>-4433.00万</AxisLabel>
  </ChartBox>
);

const Ticks = () => (
  <svg width="711" height="14" viewBox="12 1945 711 14" style={{ display: 'block', flex: 'none' }}>
    {Array.from({ length: 45 }, (_, k) => {
      const i = k + 14;
      const big = i === 28 || i === 58;
      return <line key={i} x1={cx(i)} x2={cx(i)} y1="1945" y2={big ? 1958 : 1953} stroke={big ? '#666' : k < 4 ? '#ddd' : '#aaa'} strokeWidth={big ? 2 : 1.5} />;
    })}
  </svg>
);

const ChipChart = () => (
  <Plot width="309" height="485" viewBox="742 776 309 485">
    {CHIPS.map((w, i) => {
      const y = 720 + (165 + 16.62 * i) / 2.8;
      return <rect key={i} x="741" y={y - 1.5} width={(w - 63) / 3} height="3.2" fill={i < 10 ? '#5eb64a' : '#d5545a'} />;
    })}
  </Plot>
);

const Read = ({ color, w, sx, down, ml = 7, children }) => (
  <LegendItem $color={color}>
    <Condensed $w={w} $sx={sx}>{children}</Condensed>
    <UpArrow color={color} down={down} ml={ml} />
  </LegendItem>
);

const RowOne = [['今开', '10.40', GREEN], ['最高', '11.99', RED, -2], ['最低', '10.33', GREEN]];
const RowTwo = [['换手', '8.10%', null, -1, true], ['总手', '53.24万', null, -2], ['金额', '5.97亿', null, -1.6]];

export default function App() {
  return (
    <>
      <GlobalStyle />
      <Page>
        <StatusBar>
          <Clock>3:54</Clock>
          <StatusIcons>
            <NetSpeed><NetValue>4.85</NetValue>KB/s</NetSpeed>
            <SignalWrap><HdMark>HD</HdMark><SignalIcon /></SignalWrap>
            <WifiIcon />
            <Battery><BatteryFill>100</BatteryFill></Battery>
            <BatteryCap />
            <BoltIcon />
          </StatusIcons>
        </StatusBar>

        <Header>
          <HeaderLeft>
            <BackIcon />
            <Logo>东方<br />财富</Logo>
          </HeaderLeft>
          <TitleBlock>
            <Title>ST香雪</Title>
            <CodeRow>300147<LevelTag>L2</LevelTag><CaretDown /></CodeRow>
          </TitleBlock>
          <HeaderRight>
            <Avatar />
            <ShareIcon />
            <SearchIcon />
          </HeaderRight>
        </Header>

        <Quote>
          <PriceCell>
            <Price>11.74</Price>
            <ChangeRow><span>12.45%</span><span>1.30</span></ChangeRow>
          </PriceCell>
          {RowOne.map(([l, v, c, ls]) => (
            <Cell key={l}><Label>{l}</Label><Value $color={c} $ls={ls}>{v}</Value></Cell>
          ))}
          {RowTwo.map(([l, v, c, ls, dots]) => (
            <Cell key={l}><Label>{l}{dots && <DotsCircle size={29} />}</Label><Value $color={c} $ls={ls}>{v}</Value></Cell>
          ))}
          <Cell><Label>总值<DotsCircle size={29} /></Label><Value $ls={-2.4}>77.63亿</Value></Cell>
          <Cell><Label>流值</Label><Value $ls={-3}>77.19亿</Value></Cell>
          <Cell><Label>市盈<Super>动</Super><SuperGap /><DotsCircle size={28} /></Label><Value $ls={-1.2}>-22.12</Value></Cell>
          <Cell $justify="flex-end"><MoreButton>更多</MoreButton></Cell>
        </Quote>

        <AfterHours>
          <HoursItem>盘后固定价格:<HoursValue $color={RED} $ls={-2}>11.74</HoursValue></HoursItem>
          <HoursItem>量:<HoursValue>31</HoursValue></HoursItem>
          <HoursItem>额:<HoursValue>36394</HoursValue></HoursItem>
          <HoursItem>
            盘后分时
            <Toggle><ToggleKnob /></Toggle>
            <ChevronDownThin />
          </HoursItem>
        </AfterHours>

        <Notice>
          <SpeakerIcon />
          <NoticeText>中报预披露：于2025-08-28披露2025年中报</NoticeText>
          <CloseIcon />
        </Notice>

        <PeriodTabs>
          <Period>分时</Period>
          <Period>五日</Period>
          <Period $active>日K</Period>
          <Period>周K</Period>
          <Period>月K</Period>
          <Period>更多<SmallCaret /></Period>
          <GearSlot><Settings size={50} strokeWidth={1.9} /></GearSlot>
        </PeriodTabs>

        <ChartArea>
          <LeftColumn>
            <Toolbar $h={56}>
              <Select $w={98}>均线<SelectCaret /></Select>
              <Legend $ml={14} $gap={10} $fs={35}>
                <LegendItem $color="#222" $ls={-1.5}>MA5:11.00<UpArrow color="#222" /></LegendItem>
                <LegendItem $color="#f2ab3c" $ls={-2}>10:9.72<UpArrow color="#f2ab3c" /></LegendItem>
                <LegendItem $color="#c81f8e" $ls={0.4}>20:8.80<UpArrow color="#c81f8e" /></LegendItem>
              </Legend>
            </Toolbar>
            <PriceBox />

            <Toolbar $h={57}>
              <Select $w={137}>成交量<SelectCaret /></Select>
              <Legend $ml={6} $gap={9} $fs={36}>
                <Read color="#222" w={62} sx={0.49}>53.24万</Read>
                <Read color={YELLOW} w={98} sx={0.47} down>MA1:53.12万</Read>
                <Read color={MAGENTA} w={104} sx={0.5}>MA2:41.50万</Read>
                <Read color={GREEN} w={109} sx={0.525}>MA3:25.60万</Read>
              </Legend>
              <PanelToggle><Chev dir="right" color="#fff" w={22} h={34} sw={4} /></PanelToggle>
            </Toolbar>
            <VolumeBox />

            <Toolbar $h={57}>
              <Select $w={87}>RSI<SelectCaret /></Select>
              <Legend $ml={5} $gap={16} $fs={35}>
                <Read color="#222" w={140} sx={0.85} ml={8}>RSI1:60.55</Read>
                <Read color={YELLOW} w={146} sx={0.87} ml={9}>RSI2:60.55</Read>
                <Read color={MAGENTA} w={146} sx={0.87} ml={9}>RSI3:60.55</Read>
              </Legend>
            </Toolbar>
            <RsiBox />

            <Toolbar $h={57}>
              <Select $w={170}>资金趋势<SelectCaret /></Select>
              <Legend $ml={3} $gap={12} $fs={35}>
                <Read color="#222" w={83} sx={0.73}>1490万</Read>
                <Read color={YELLOW} w={143} sx={0.69} down>MA1:-2187万</Read>
                <Read color={MAGENTA} w={146} sx={0.74}>MA2:-62.7万</Read>
              </Legend>
            </Toolbar>
            <FundBox />

            <DateAxis>
              <Ticks />
              <DateRow>
                <DateText $ls={0.2}>20250605</DateText>
                <DateText $ls={-1.5}>20250715</DateText>
                <DateText $ls={-0.1}>20250826</DateText>
              </DateRow>
            </DateAxis>
          </LeftColumn>

          <RightColumn>
            <Toolbar $h={57}>
              <Select $w={116} $ml={47} $fs={32}>DK点<CornerCaret /></Select>
              <Select $w={121} $ml={40} $fs={32} $justify="center">前复权</Select>
            </Toolbar>
            <ChipBox>
              <ChipChart />
              <RoundControl $x={140} $y={444} $tint="rgba(240,110,50,0.1)"><ResizeIcon /></RoundControl>
            </ChipBox>
            <ChipLegend>
              <Swatch $color="#5cbb44" />套牢
              <Swatch $color="#ea4a4a" $ml={36} />获利
            </ChipLegend>
            <Stats>
              <StatRow>获利比例:<StatValue>97.60%</StatValue></StatRow>
              <StatRow>平均成本:<StatValue>8.75</StatValue></StatRow>
              <StatRow>90%成本:<StatValue>6.47-11.57</StatValue></StatRow>
              <StatRow>集中度:<StatValue>28.27%</StatValue></StatRow>
              <NoteRow>说明<InfoDot>i</InfoDot><NoteDate>2025-08-26</NoteDate></NoteRow>
            </Stats>
          </RightColumn>
        </ChartArea>

        <InfoTabs>
          <InfoTab $active>股吧</InfoTab>
          <InfoTab>盘口</InfoTab>
          <InfoTab>资讯</InfoTab>
          <InfoTab>公告</InfoTab>
          <InfoTab>研报</InfoTab>
          <InfoTab>财务</InfoTab>
          <InfoTab>资料</InfoTab>
        </InfoTabs>
        <Peek><PeekCard /><PeekCard /></Peek>

        <BottomBar>
          <IndexBlock>
            <IndexCaret />
            <IndexValue>3868.38</IndexValue>
            <IndexRow>上证<IndexChange>-0.39%</IndexChange></IndexRow>
          </IndexBlock>
          <NavAction><IconSlot><TradeIcon /></IconSlot>交易</NavAction>
          <NavAction><IconSlot><PostIcon /></IconSlot>发帖</NavAction>
          <NavAction><IconSlot><AppsIcon /></IconSlot>功能<RedDot /></NavAction>
          <NavAction $fs={32}><IconSlot><DotsCircle size={52} stroke="#666" sw={1.4} /></IconSlot>设自选</NavAction>
        </BottomBar>

        <SystemNav>
          <svg width="38" height="36" viewBox="0 0 38 36">
            <rect y="1" width="38" height="6" rx="2" fill="#8a8a8a" />
            <rect y="15" width="38" height="6" rx="2" fill="#8a8a8a" />
            <rect y="29" width="38" height="6" rx="2" fill="#8a8a8a" />
          </svg>
          <svg width="38" height="40" viewBox="0 0 38 40">
            <rect x="2.5" y="2.5" width="33" height="35" rx="8" fill="none" stroke="#8a8a8a" strokeWidth="5" />
          </svg>
          <svg width="26" height="40" viewBox="0 0 26 40">
            <path d="M23 2L4 20L23 38" fill="none" stroke="#8a8a8a" strokeWidth="4.6" strokeLinecap="round" strokeLinejoin="round" />
          </svg>
        </SystemNav>
      </Page>
    </>
  );
}
